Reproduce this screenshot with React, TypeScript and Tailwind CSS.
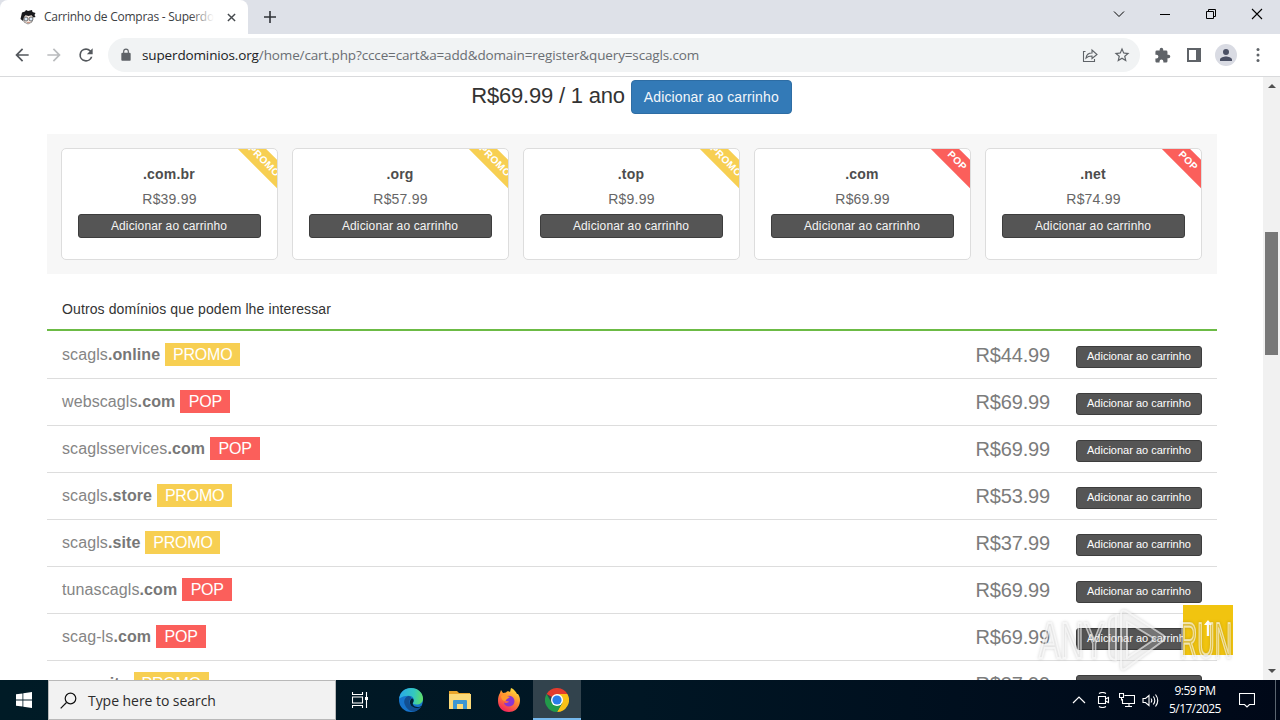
import { type ReactNode } from 'react';

type Tag = 'PROMO' | 'POP';

const cards: { tld: string; price: string; tag: Tag }[] = [
  { tld: '.com.br', price: 'R$39.99', tag: 'PROMO' },
  { tld: '.org', price: 'R$57.99', tag: 'PROMO' },
  { tld: '.top', price: 'R$9.99', tag: 'PROMO' },
  { tld: '.com', price: 'R$69.99', tag: 'POP' },
  { tld: '.net', price: 'R$74.99', tag: 'POP' },
];

const rows: { name: string; tld: string; price: string; tag: Tag }[] = [
  { name: 'scagls', tld: '.online', price: 'R$44.99', tag: 'PROMO' },
  { name: 'webscagls', tld: '.com', price: 'R$69.99', tag: 'POP' },
  { name: 'scaglsservices', tld: '.com', price: 'R$69.99', tag: 'POP' },
  { name: 'scagls', tld: '.store', price: 'R$53.99', tag: 'PROMO' },
  { name: 'scagls', tld: '.site', price: 'R$37.99', tag: 'PROMO' },
  { name: 'tunascagls', tld: '.com', price: 'R$69.99', tag: 'POP' },
  { name: 'scag-ls', tld: '.com', price: 'R$69.99', tag: 'POP' },
  { name: 'scag', tld: '.site', price: 'R$37.99', tag: 'PROMO' },
];

const tagColor: Record<Tag, string> = {
  PROMO: 'bg-[#f7cf52]',
  POP: 'bg-[#fb5f5b]',
};

const tagWidth: Record<Tag, string> = {
  PROMO: 'w-[75px]',
  POP: 'w-[50px]',
};

const Icon = ({ children, className = '', box = 24 }: { children: ReactNode; className?: string; box?: number }) => (
  <svg viewBox={`0 0 ${box} ${box}`} fill="currentColor" className={`shrink-0 ${className}`}>
    {children}
  </svg>
);

const TabStrip = () => (
  <div className="flex h-[34px] bg-[#dee1e8]">
    <div className="flex h-full w-[248px] items-center rounded-t-lg bg-white pl-5">
      <svg viewBox="0 0 16 16" className="h-4 w-4 shrink-0">
        <path d="M3 6h10l-1 7-4 2-4-2z" fill="#f2e4dc" stroke="#555" strokeWidth=".6" />
        <path d="M.5 10 2 3.500l3-1 1-1.500 2 1 4-1 .5 2 3 1-1 2 1 2-2 .5-2-2.500-3 1-3-1-2 3-.5 3z" fill="#18191c" />
        <circle cx="6" cy="10" r="2" fill="#dbe9f8" stroke="#555" strokeWidth=".8" />
        <circle cx="11" cy="10" r="2" fill="#dbe9f8" stroke="#555" strokeWidth=".8" />
        <path d="M7 13.500h3" stroke="#c98" />
      </svg>
      <div className="relative ml-2 w-[170px] overflow-hidden whitespace-nowrap text-[12px] tracking-[-0.26px] text-[#3c4043]">
        Carrinho de Compras - Superdo
        <div className="absolute inset-y-0 right-0 w-6 bg-linear-to-r from-transparent to-white" />
      </div>
      <Icon box={10} className="ml-[13px] h-[9px] w-[9px] text-[#45494d]">
        <path d="m1 1 8 8M9 1 1 9" stroke="currentColor" strokeWidth="1.600" />
      </Icon>
    </div>
    <Icon box={12} className="mt-[11px] ml-4 h-3 w-3 text-[#303338]">
      <path d="M5.200 0h1.600v5.200H12v1.600H6.800V12H5.200V6.800H0V5.200h5.200z" />
    </Icon>
    <div className="ml-auto flex h-[28px] items-center gap-[34px] pr-[17px] text-black">
      <Icon box={12} className="h-3 w-3">
        <path d="m1 3.500 5 5 5-5" fill="none" stroke="currentColor" />
      </Icon>
      <Icon box={12} className="h-3 w-3">
        <path d="M1 6h10v1H1z" />
      </Icon>
      <Icon box={12} className="h-3 w-3">
        <path d="M1.500 3.500h7v7h-7zM3.500 3.500v-2h7v7h-2" fill="none" stroke="currentColor" />
      </Icon>
      <Icon box={12} className="h-3 w-3">
        <path d="m1 1 10 10M11 1 1 11" stroke="currentColor" strokeWidth="1.100" />
      </Icon>
    </div>
  </div>
);

const Toolbar = () => (
  <div className="flex h-[43px] items-center border-b border-[#d9dadc] bg-white pl-3 text-[#5f6368]">
    <Icon className="h-5 w-5 text-[#54585d]">
      <path d="M20 11H7.830l5.590-5.590L12 4l-8 8 8 8 1.410-1.410L7.830 13H20z" />
    </Icon>
    <Icon className="ml-3 h-5 w-5 text-[#babcbe]">
      <path d="m12 4-1.410 1.410L16.170 11H4v2h12.170l-5.580 5.590L12 20l8-8z" />
    </Icon>
    <Icon className="ml-3 h-5 w-5 text-[#54585d]">
      <path d="M17.650 6.350A7.960 7.960 0 0 0 12 4a8 8 0 1 0 7.730 10h-2.080A6 6 0 1 1 12 6c1.660 0 3.140.69 4.220 1.780L13 11h7V4z" />
    </Icon>
    <div className="ml-3 flex h-[34px] w-[1032px] items-center rounded-full bg-[#f1f3f4] pr-[9px] pl-[11px]">
      <Icon className="h-3.5 w-3.5">
        <path d="M18 8h-1V6A5 5 0 0 0 7 6v2H6a2 2 0 0 0-2 2v10c0 1.100.9 2 2 2h12a2 2 0 0 0 2-2V10a2 2 0 0 0-2-2zM9 6a3 3 0 0 1 6 0v2H9z" />
      </Icon>
      <div className="ml-[9px] text-[13.500px] tracking-[-0.135px] whitespace-nowrap text-[#6a6e73]">
        <span className="text-[#202124]">superdominios.org</span>/home/cart.php?ccce=cart&amp;a=add&amp;domain=register&amp;query=scagls.com
      </div>
      <Icon box={16} className="ml-auto h-4 w-4">
        <path d="M3.500 4.500h-2v10h11V12M4 11c.5-3.500 2.500-5 6-5V3l5 4.500-5 4V9c-2.500 0-4.500.5-6 2z" fill="none" stroke="currentColor" strokeWidth="1.100" />
      </Icon>
      <Icon className="ml-[15px] h-[18px] w-[18px]">
        <path d="m22 9.240-7.190-.62L12 2 9.190 8.630 2 9.240l5.460 4.730L5.820 21 12 17.270 18.180 21l-1.630-7.030zM12 15.400l-3.760 2.270 1-4.280-3.320-2.880 4.380-.38L12 6.100l1.710 4.040 4.380.38-3.320 2.880 1 4.280z" />
      </Icon>
    </div>
    <Icon className="ml-[14px] h-[17px] w-[17px]">
      <path d="M20.500 11H19V7a2 2 0 0 0-2-2h-4V3.500a2.500 2.500 0 0 0-5 0V5H4a2 2 0 0 0-2 2v3.800h1.500a2.700 2.700 0 0 1 0 5.400H2V20c0 1.100.9 2 2 2h3.800v-1.500a2.700 2.700 0 0 1 5.400 0V22H17a2 2 0 0 0 2-2v-4h1.500a2.500 2.500 0 0 0 0-5z" />
    </Icon>
    <Icon box={14} className="ml-4 h-3.5 w-3.5">
      <path d="M0 0h14v14H0zM2 2v10h7V2z" fillRule="evenodd" />
    </Icon>
    <div className="ml-[14px] flex h-[22px] w-[22px] items-center justify-center rounded-full bg-[#d9dbe3] text-[#4a5064]">
      <Icon className="h-[18px] w-[18px]">
        <path d="M12 12a4 4 0 1 0 0-8 4 4 0 0 0 0 8zm0 2c-2.670 0-8 1.340-8 4v2h16v-2c0-2.660-5.330-4-8-4z" />
      </Icon>
    </div>
    <Icon className="ml-[11px] h-5 w-5">
      <circle cx="12" cy="5.500" r="1.800" />
      <circle cx="12" cy="12" r="1.800" />
      <circle cx="12" cy="18.500" r="1.800" />
    </Icon>
  </div>
);

const DomainCard = ({ tld, price, tag }: (typeof cards)[number]) => (
  <div className="relative h-28 w-[217px] overflow-hidden rounded-[5px] border border-[#ddd] bg-white px-4 pt-4 text-center">
    <div
      className={`absolute top-[2px] right-[-27px] h-5 w-20 rotate-45 text-center text-[10px] leading-[19px] font-bold tracking-[0.5px] text-white ${tagColor[tag]}`}
    >
      {tag}
    </div>
    <div className="h-[22px] pr-px text-[14px] leading-[19px] font-bold tracking-[0.2px] text-[#4d4d4d]">{tld}</div>
    <div className="h-[27px] pt-[2px] text-[14px] leading-[20px] tracking-[0.2px] text-[#666]">{price}</div>
    <div className="h-6 rounded-[3px] border border-[#3d3d3d] bg-[#555] pr-px text-[12px] leading-[22px] tracking-[0.13px] text-[#f4f4f4]">
      Adicionar ao carrinho
    </div>
  </div>
);

const DomainRow = ({ name, tld, price, tag }: (typeof rows)[number]) => (
  <div className="flex h-[47px] shrink-0 border-b border-[#ddd] px-[15px] text-[#777]">
    <div className="flex pt-[11px] text-[16px] leading-[23px]">
      <span className="tracking-[0.1px] text-[#858585]">{name}</span>
      <span className="font-bold tracking-[0.1px]">{tld}</span>
      <span className={`ml-[5px] h-[23px] text-center tracking-[-0.2px] text-white ${tagColor[tag]} ${tagWidth[tag]}`}>{tag}</span>
    </div>
    <div className="ml-auto pt-[11px] text-[20px] leading-6 tracking-[-0.15px] text-[#7c7c7c]">{price}</div>
    <div className="mt-[14px] ml-[26px] h-[22px] w-[126px] rounded-[3px] border border-[#3d3d3d] bg-[#555] text-center text-[11px] leading-[19px] text-white">
      Adicionar ao carrinho
    </div>
  </div>
);

const CartPage = () => (
  <div className="flex h-full w-[1263px] flex-col overflow-hidden bg-white px-[47px] pr-[46px] font-['Liberation_Sans',Arial,sans-serif]">
    <div className="flex h-[57px] shrink-0 justify-center pt-[3px] pr-px">
      <div className="text-[22px] leading-[31px] tracking-[-0.2px] text-[#333]">R$69.99 / 1 ano</div>
      <div className="ml-1.5 h-[34px] w-[161px] rounded-[4px] border border-[#2e6da4] bg-[#337ab7] text-center text-[14px] leading-[32px] tracking-[0.13px] text-[#f2f6fa]">
        Adicionar ao carrinho
      </div>
    </div>
    <div className="flex h-[140px] shrink-0 gap-[14px] bg-[#f7f7f7] p-[14px]">
      {cards.map((card) => (
        <DomainCard key={card.tld} {...card} />
      ))}
    </div>
    <div className="mt-[18px] mb-px h-[39px] shrink-0 border-b-2 border-[#6cbb45] pl-[15px] text-[14px] leading-[34px] tracking-[0.11px] text-[#333]">
      Outros domínios que podem lhe interessar
    </div>
    {rows.map((row, i) => (
      <DomainRow key={i} {...row} />
    ))}
  </div>
);

const Scrollbar = () => (
  <div className="flex w-[17px] flex-col items-center bg-[#f1f1f1] text-[#505050]">
    <Icon box={8} className="mt-[5px] h-2 w-2">
      <path d="m0 6 4-4 4 4z" />
    </Icon>
    <div className="mt-[142px] h-[123px] w-[13px] bg-[#787878]" />
    <Icon box={8} className="mt-auto mb-[5px] h-2 w-2">
      <path d="m0 2 4 4 4-4z" />
    </Icon>
  </div>
);

const BackToTop = () => (
  <div className="absolute top-[528px] left-[1183px] flex h-[50px] w-[50px] items-center justify-center bg-[#f1c40f] text-white">
    <Icon box={16} className="mb-1 h-4 w-4">
      <path d="m8 0 4 5H9.200v11H6.800V5H4z" />
    </Icon>
  </div>
);

const Watermark = () => (
  <svg viewBox="0 0 210 80" className="absolute top-[523px] left-[1030px] h-20 w-[210px] drop-shadow-[0_0_1.5px_rgba(0,0,0,0.3)]">
    <g
      fill="#ffffff"
      fillOpacity=".22"
      stroke="#ffffff"
      strokeOpacity=".6"
      strokeWidth="2"
      strokeLinejoin="round"
      fontFamily="Liberation Sans, sans-serif"
      fontSize="50"
    >
      <text x="9" y="58" textLength="66" lengthAdjust="spacingAndGlyphs">ANY</text>
      <text x="150" y="58" textLength="52" lengthAdjust="spacingAndGlyphs">RUN</text>
      <path d="M79 24q0-8 7-8v44q-7 0-7-8z" />
      <path d="M91 14q0-5 5-3l37 24q4 3 0 6L95 69q-4 2-4-3zM97 22v36l28-19z" fillRule="evenodd" />
    </g>
  </svg>
);

const Taskbar = () => (
  <div className="flex h-10 bg-[#001521] bg-linear-to-r from-[#001b26] via-[#001624] to-[#000818] text-white">
    <div className="flex w-12 items-center justify-center">
      <Icon box={16} className="h-4 w-4">
        <path d="m0 2.300 6.500-.9v6.200H0zm7.300-1L16 0v7.600H7.300zM0 8.400h6.500v6.200L0 13.700zm7.300 0H16V16l-8.700-1.200z" />
      </Icon>
    </div>
    <div className="flex w-[288px] items-center border border-[#b9b9b9] bg-[#f2f2f2] pl-[11px] text-[#2c2c2c]">
      <svg viewBox="0 0 17 17" className="h-[17px] w-[17px]" fill="none" stroke="#111" strokeWidth="1.200">
        <circle cx="10.500" cy="6.500" r="5.300" />
        <path d="M6.500 10.500.7 16.300" />
      </svg>
      <span className="ml-[11px] text-[14px] tracking-[-0.05px]">Type here to search</span>
    </div>
    <div className="flex w-12 items-center justify-center">
      <svg viewBox="0 0 16 16" className="h-4 w-4" fill="none" stroke="#fff" strokeWidth="1.100">
        <path d="M.5 0v2.500h10V0M.5 16v-2.500h10V16M.5 5h10v6H.5zM14.500 0v16" />
        <path d="M13 5h3v3h-3z" fill="#fff" stroke="none" />
      </svg>
    </div>
    <div className="ml-[3px] flex w-12 items-center justify-center">
      <svg viewBox="0 0 24 24" className="h-6 w-6">
        <defs>
          <linearGradient id="edgeTop" x1="0" y1=".4" x2="1" y2=".5">
            <stop offset="0" stopColor="#2aa9e8" />
            <stop offset=".6" stopColor="#33c8c0" />
            <stop offset="1" stopColor="#60df66" />
          </linearGradient>
        </defs>
        <circle cx="12" cy="12" r="12" fill="#1674cc" />
        <path d="M.2 10.500C1 4 6 0 12 0c7 0 12 5 12 10.500 0 4-3 6-6.500 6-3 0-4-1-3.300-2.300 2-3-.2-6.500-4.700-6.500-4 0-7 1.300-9.300 2.800z" fill="url(#edgeTop)" />
        <path d="M9.500 8C6 9 4 13 6 17c2 4.500 6 7 10 6.200 3-.8 5-2.600 6.300-4.700-4 2-8 1.500-10.300-1-2.200-2.400-2-5.500.2-7.200C12 8.800 11 8 9.500 8z" fill="#124f92" />
        <path d="M14.200 14.200C12.700 16 15 19 18.500 18.900c2 0 3.200-.5 4-1l-.6 1.200c-4.500 2-9.500.5-10.700-3-.8-2.600 0-4.500 1.800-5.800 1.900 1 2 2.600 1.200 3.900z" fill="#002033" />
      </svg>
    </div>
    <div className="ml-px flex w-12 items-center justify-center">
      <svg viewBox="0 0 22 20" className="h-5 w-[22px]">
        <path d="M0 1h8l2 2h11v16H0z" fill="#e9a52b" />
        <path d="M0 4h22v15H0z" fill="#fbd978" />
        <path d="M4 19v-8q0-1 1-1h12q1 0 1 1v8h-4v-5H8v5z" fill="#3c96d2" />
      </svg>
    </div>
    <div className="ml-px flex w-12 items-center justify-center">
      <svg viewBox="0 0 24 24" className="h-6 w-6">
        <defs>
          <linearGradient id="foxBody" x1=".8" y1="0" x2=".3" y2="1">
            <stop offset="0" stopColor="#ffe83d" />
            <stop offset=".45" stopColor="#ff9030" />
            <stop offset="1" stopColor="#f4205e" />
          </linearGradient>
        </defs>
        <path d="M3 5 4 2l2 3 3-.5C10 3 12 3 13 4l1-4c3 1 5 4 6 6l1 0c2 3 2.500 6 1.500 10C21 21 17 24 12 24 5.500 24 1 19.500 1 13c0-3 .5-6 2-8z" fill="url(#foxBody)" />
        <path d="M8 10c2-3 7-3 9 1 1.500 4-1 7.500-5 7.500-3 0-5-2-5-4 2 1 4 .5 5-1l-3-.5z" fill="#8b35d2" />
        <path d="M4 8c2-2 4-2 6 0l3 1-3 2-2 2c-2 0-4-2-4-5z" fill="#ff9a2c" />
      </svg>
    </div>
    <div className="flex w-12 items-center justify-center border-b-2 border-[#76b9ed] bg-[#32434d]">
      <svg viewBox="0 0 24 24" className="mt-0.5 h-6 w-6">
        <path d="M12 12 1.600 6A12 12 0 0 1 22.400 6z" fill="#e33b2e" />
        <path d="M12 12V6h10.400A12 12 0 0 1 12 24l5.200-9z" fill="#fbc116" />
        <path d="m12 12 5.200 3L12 24A12 12 0 0 1 1.600 6l5.200 9z" fill="#229a4a" />
        <circle cx="12" cy="12" r="6" fill="#fff" />
        <circle cx="12" cy="12" r="4.600" fill="#2a7de9" />
      </svg>
    </div>
    <div className="ml-auto flex items-center">
      <Icon box={14} className="h-3.5 w-3.5">
        <path d="m1 10 6-6 6 6" fill="none" stroke="currentColor" strokeWidth="1.200" />
      </Icon>
      <Icon box={16} className="ml-[9px] h-4 w-4">
        <path d="M3.500 4.500h7v7h-7zM10.500 7l3-1.500v5l-3-1.500M4 1.500q3.500-2 7 0M4 14.500q3.500 2 7 0" fill="none" stroke="currentColor" strokeWidth="1.100" />
      </Icon>
      <Icon box={16} className="ml-2 h-4 w-4">
        <path d="M5.500 3.500h10v8h-12V7M10 11.500v3M6 14.500h7M.5 1.500h4v4h-4zM2.500 5.500v3" fill="none" stroke="currentColor" strokeWidth="1.100" />
      </Icon>
      <Icon box={17} className="ml-[7px] h-[17px] w-[17px]">
        <path d="M1 6.500h2.500l3.500-3v10l-3.500-3H1zM9 6.500q1.500 2 0 4M11.300 4.500q3 4 0 8M13.500 2.500q4.500 6 0 12" fill="none" stroke="currentColor" strokeWidth="1.100" />
      </Icon>
      <div className="ml-[9px] w-[54px] text-center text-[12px] leading-[18px] tracking-[-0.55px] whitespace-nowrap">
        <div>9:59 PM</div>
        <div>5/17/2025</div>
      </div>
      <Icon box={16} className="ml-[17px] h-4 w-4">
        <path d="M.5 1.500h15v11h-5L8 15l-2.500-2.500h-5z" fill="none" stroke="currentColor" strokeWidth="1.100" />
      </Icon>
      <div className="ml-[20px] h-10 w-[5px] border-l border-[#5b6570]" />
    </div>
  </div>
);

const App = () => (
  <div className="flex h-[720px] w-[1280px] flex-col overflow-hidden bg-white font-['Open_Sans','Noto_Sans',sans-serif]">
    <TabStrip />
    <Toolbar />
    <div className="relative flex h-[603px] overflow-hidden">
      <CartPage />
      <Scrollbar />
      <BackToTop />
      <Watermark />
    </div>
    <Taskbar />
  </div>
);

export default App;
